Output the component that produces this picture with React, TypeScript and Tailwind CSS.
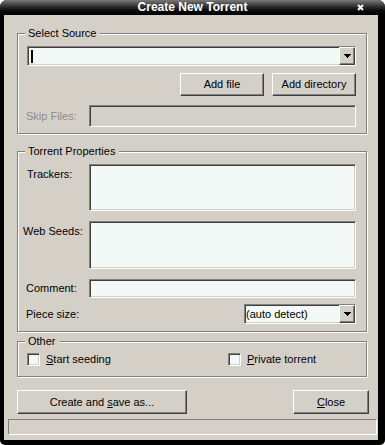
import React from "react";

const SUNKEN =
  "border border-t-[#808080] border-l-[#808080] border-b-white border-r-white shadow-[inset_1px_1px_0_#404040,inset_-1px_-1px_0_#d4d0c8]";
const RAISED =
  "border border-t-white border-l-white border-b-[#404040] border-r-[#404040] shadow-[inset_-1px_-1px_0_#808080] bg-[#d4d0c8]";

function Group({
  label,
  className,
  children,
}: {
  label: string;
  className: string;
  children?: React.ReactNode;
}) {
  return (
    <div
      className={`relative border border-[#808080] shadow-[inset_1px_1px_0_#fff,1px_1px_0_#fff] ${className}`}
    >
      <span className="absolute left-[7px] -top-[7px] pl-[3px] pr-[4px] bg-[#d4d0c8] leading-[13px] whitespace-nowrap">
        {label}
      </span>
      {children}
    </div>
  );
}

function Arrow() {
  return (
    <svg width="7" height="4" viewBox="0 0 7 4" shapeRendering="crispEdges">
      <path d="M0 0h7v1h-1v1h-1v1h-1v1h-1v-1h-1v-1h-1v-1h-1z" fill="#000" />
    </svg>
  );
}

function DropBtn() {
  return (
    <div className={`w-[16px] h-full flex items-center justify-center ${RAISED}`}>
      <Arrow />
    </div>
  );
}

function Button({
  className,
  children,
}: {
  className: string;
  children: React.ReactNode;
}) {
  return (
    <div
      className={`flex items-center justify-center whitespace-nowrap ${RAISED} ${className}`}
    >
      <span>{children}</span>
    </div>
  );
}

function Check() {
  return <div className={`w-[13px] h-[13px] shrink-0 bg-[#f3f9f6] ${SUNKEN}`} />;
}

export default function App() {
  return (
    <div className="w-[385px] h-[445px] bg-white font-['Liberation_Sans',Arial,sans-serif] text-[11px] leading-[13px] text-black">
      <div className="w-[385px] h-[445px] bg-black rounded-t-[7px] rounded-b-[5px] flex flex-col overflow-hidden">
        {/* Title bar */}
        <div className="h-[15px] shrink-0 grid grid-cols-[1fr_auto_1fr] items-center bg-[linear-gradient(to_bottom,#7a7a7a_0%,#3c3c3c_35%,#0a0a0a_70%,#000_100%)]">
          <div />
          <span className="text-white font-bold text-[12px] leading-[15px]">
            Create New Torrent
          </span>
          <div className="flex justify-end pr-[21px]">
            <svg width="7" height="7" viewBox="0 0 7 7">
              <path d="M1 1L6 6M6 1L1 6" stroke="#fff" strokeWidth="2" />
            </svg>
          </div>
        </div>

        {/* Client area */}
        <div className="flex-1 ml-[4px] mr-[7px] mb-[5px] bg-[#d4d0c8] flex flex-col">
          <Group
            label="Select Source"
            className="mt-[18px] ml-[13px] mr-[11px] h-[101px] shrink-0 pl-[8px] pr-[10px] pt-[12px]"
          >
            <div className={`ml-[1px] h-[20px] flex bg-[#f3f9f6] ${SUNKEN}`}>
              <div className="flex-1 flex items-center pl-[3px]">
                <div className="w-[2px] h-[13px] bg-black" />
              </div>
              <DropBtn />
            </div>
            <div className="mt-[7px] flex justify-end gap-[8px]">
              <Button className="w-[84px] h-[23px]">Add file</Button>
              <Button className="w-[84px] h-[23px]">Add directory</Button>
            </div>
            <div className="mt-[9px] flex items-center">
              <div className="w-[63px] text-[#8c8c8a]">Skip Files:</div>
              <div className={`flex-1 h-[22px] bg-[#d4d0c8] ${SUNKEN}`} />
            </div>
          </Group>

          <Group
            label="Torrent Properties"
            className="mt-[17px] ml-[13px] mr-[11px] h-[181px] shrink-0 pl-[8px] pr-[10px] pt-[12px]"
          >
            <div className="flex">
              <div className="w-[63px] pl-[1px] pt-[4px]">Trackers:</div>
              <div className={`flex-1 h-[47px] bg-[#f3f9f6] ${SUNKEN}`} />
            </div>
            <div className="mt-[10px] flex">
              <div className="w-[66px] -ml-[3px] pt-[4px]">Web Seeds:</div>
              <div className={`flex-1 h-[48px] bg-[#f3f9f6] ${SUNKEN}`} />
            </div>
            <div className="mt-[10px] flex items-center">
              <div className="w-[63px]">Comment:</div>
              <div className={`flex-1 h-[19px] bg-[#f3f9f6] ${SUNKEN}`} />
            </div>
            <div className="mt-[6px] flex items-center justify-between">
              <div>Piece size:</div>
              <div className={`w-[112px] h-[20px] flex bg-[#f3f9f6] ${SUNKEN}`}>
                <div className="flex-1 flex items-center pl-[1px] whitespace-nowrap">
                  (auto detect)
                </div>
                <DropBtn />
              </div>
            </div>
          </Group>

          <Group
            label="Other"
            className="mt-[9px] ml-[13px] mr-[11px] h-[36px] shrink-0 pl-[9px] pt-[11px] flex items-start"
          >
            <div className="w-[201px] flex items-center gap-[6px]">
              <Check />
              <span>
                <u>S</u>tart seeding
              </span>
            </div>
            <div className="flex items-center gap-[6px]">
              <Check />
              <span>
                <u>P</u>rivate torrent
              </span>
            </div>
          </Group>

          <div className="mt-[13px] ml-[13px] mr-[9px] flex justify-between shrink-0">
            <Button className="w-[170px] h-[24px]">
              Create and <u>s</u>ave as...
            </Button>
            <Button className="w-[76px] h-[24px]">
              <u>C</u>lose
            </Button>
          </div>

          <div className="mt-[5px] ml-[4px] mr-[1px] h-[16px] shrink-0 border border-t-[#808080] border-l-[#808080] border-b-white border-r-white" />
        </div>
      </div>
    </div>
  );
}
